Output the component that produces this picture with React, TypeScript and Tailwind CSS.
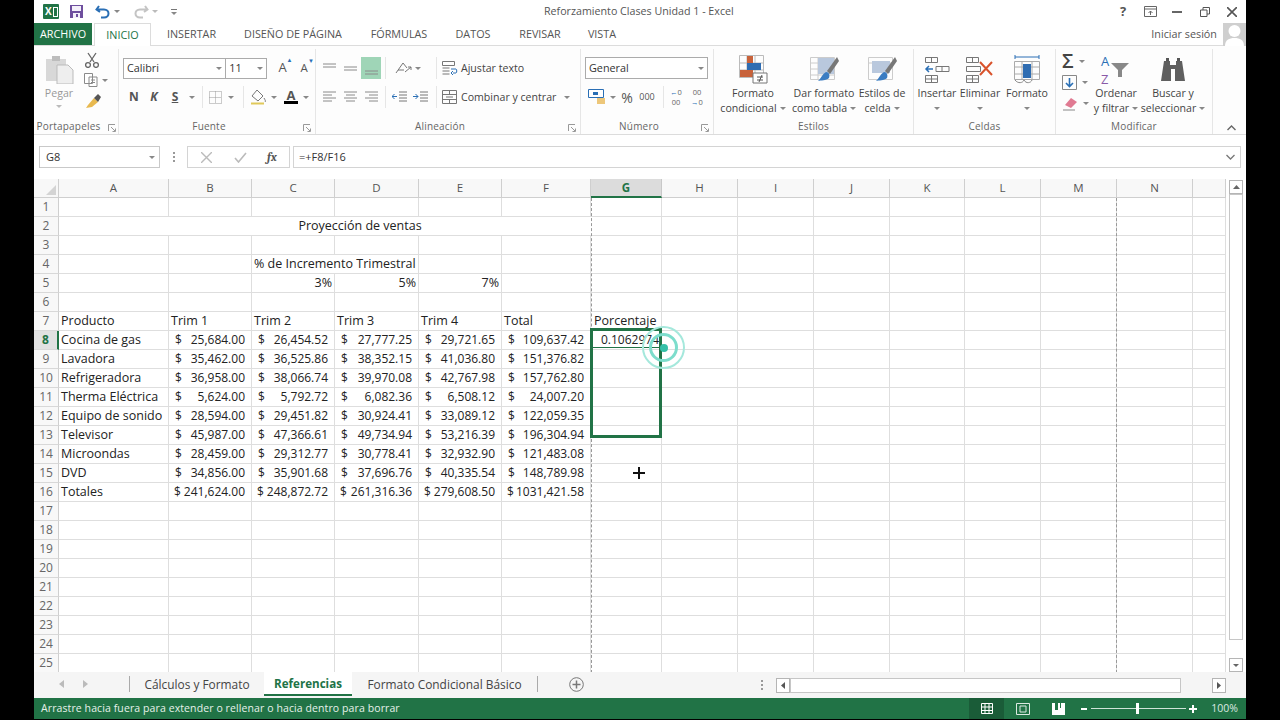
import React from "react";

const cols = [110, 83, 83, 84, 83, 89, 71, 76, 76, 76, 75, 76, 76, 76, 33];
const colNames = ["A","B","C","D","E","F","G","H","I","J","K","L","M","N",""];
type R = [string, string, string, string, string, string];
const data: Record<number, R> = {
  8: ["Cocina de gas","25,684.00","26,454.52","27,777.25","29,721.65","109,637.42"],
  9: ["Lavadora","35,462.00","36,525.86","38,352.15","41,036.80","151,376.82"],
  10: ["Refrigeradora","36,958.00","38,066.74","39,970.08","42,767.98","157,762.80"],
  11: ["Therma Eléctrica","5,624.00","5,792.72","6,082.36","6,508.12","24,007.20"],
  12: ["Equipo de sonido","28,594.00","29,451.82","30,924.41","33,089.12","122,059.35"],
  13: ["Televisor","45,987.00","47,366.61","49,734.94","53,216.39","196,304.94"],
  14: ["Microondas","28,459.00","29,312.77","30,778.41","32,932.90","121,483.08"],
  15: ["DVD","34,856.00","35,901.68","37,696.76","40,335.54","148,789.98"],
  16: ["Totales","241,624.00","248,872.72","261,316.36","279,608.50","1031,421.58"],
};
const header = ["Producto","Trim 1","Trim 2","Trim 3","Trim 4","Total","Porcentaje"];

const Caret = ({ c = "#888" }: { c?: string }) => (
  <svg width="6" height="3" viewBox="0 0 6 3"><path d="M0 0h6L3 3z" fill={c} /></svg>
);
const Launcher = () => (
  <svg width="8" height="8" viewBox="0 0 8 8" fill="none" stroke="#999"><path d="M.5 7V.5H7M3 3l4 4M4.5 7.5h3v-3" /></svg>
);
const Sep = ({ h = 22 }: { h?: number }) => <div className="w-px bg-[#e6e6e6] shrink-0" style={{ height: h }} />;
const Slot = ({ w, children }: { w: number; children?: React.ReactNode }) => (
  <div className="flex items-center justify-center shrink-0 h-full" style={{ width: w }}>{children}</div>
);
const Lines = ({ kind }: { kind: string }) => {
  const rows: Record<string, string> = {
    top: "M1 2h13M1 5h13",
    mid: "M1 5h13M1 8h13",
    bot: "M1 9h13M1 12h13",
    left: "M1 1h13M1 4h9M1 7h13M1 10h9",
    center: "M1 1h13M3 4h9M1 7h13M3 10h9",
    right: "M1 1h13M5 4h9M1 7h13M5 10h9",
  };
  return <svg width="15" height="13" viewBox="0 0 15 13" fill="none" stroke="#8a8a8a"><path d={rows[kind]} /></svg>;
};
const Big = ({ l1, l2, w, children }: { l1: string; l2: string; w: number; children: React.ReactNode }) => (
  <div className="flex flex-col items-center shrink-0 pt-[5px]" style={{ width: w }}>
    <div className="h-[30px] flex items-center justify-center">{children}</div>
    <div className="mt-[2px] leading-[15px] text-[10.6px] text-[#444] text-center whitespace-nowrap">{l1}</div>
    <div className="leading-[15px] text-[10.6px] text-[#444] text-center whitespace-nowrap flex items-center justify-center gap-[3px] h-[15px]">{l2}<Caret /></div>
  </div>
);
const Group = ({ w, label, launcher, labelPad = 16, launcherRight = 4, children }: { w: number; label: string; launcher?: boolean; labelPad?: number; launcherRight?: number; children: React.ReactNode }) => (
  <div className="flex flex-col shrink-0 border-r border-[#e6e6e6] h-[85px] mt-[3px]" style={{ width: w }}>
    <div className="h-[70px] flex flex-col">{children}</div>
    <div className="flex-1 flex items-center justify-center relative text-[10px] text-[#666] tracking-[0.2px]" style={{ paddingRight: labelPad }}>
      {label}
      {launcher && <span className="absolute top-[5px]" style={{ right: launcherRight }}><Launcher /></span>}
    </div>
  </div>
);

function TitleBar() {
  return (
    <div className="h-[23px] flex items-center relative text-[#555]">
      <div className="ml-[9px] w-[16px] h-[15px] bg-[#217346] text-white text-[10px] font-bold leading-[15px] pl-[2px] flex items-center gap-[1px] rounded-[1px]">
        X<span className="w-[5px] h-[10px] border border-white bg-[#217346]" />
      </div>
      <svg className="ml-[10px]" width="15" height="15" viewBox="0 0 15 15"><path d="M1 1h13v13H1z" fill="#6e4f9e" /><path d="M3 2h9v5H3z" fill="#f4f0fa" /><path d="M4 9h7v5H4z" fill="#f4f0fa" /><path d="M7 10h2v3H7z" fill="#6e4f9e" /></svg>
      <svg className="ml-[11px]" width="16" height="14" viewBox="0 0 16 14" fill="none" stroke="#2a6fb5" strokeWidth="2"><path d="M4 1 1.5 4.5 5 7M2 4.5h7c6 0 6 8 0 8H6" /></svg>
      <span className="ml-[3px]"><Caret /></span>
      <svg className="ml-[13px]" width="16" height="14" viewBox="0 0 16 14" fill="none" stroke="#c4c4c4" strokeWidth="2"><path d="M12 1l2.5 3.5L11 7M14 4.5H7c-6 0-6 8 0 8h3" /></svg>
      <span className="ml-[3px]"><Caret c="#bbb" /></span>
      <div className="ml-[13px] flex flex-col items-center gap-[2px]"><span className="w-[6px] h-px bg-[#777]" /><Caret /></div>
      <div className="flex-1 pl-[367px] text-[10.7px] text-[#555] whitespace-nowrap">Reforzamiento Clases Unidad 1 - Excel</div>
      <span className="text-[13px] font-bold w-[28px] text-center">?</span>
      <svg className="ml-[7px]" width="13" height="11" viewBox="0 0 13 11" fill="none" stroke="#666"><path d="M.5.5h12v10H.5zM.5 3h12M6.5 9V5M4.5 7l2-2 2 2" /></svg>
      <span className="ml-[15px] w-[10px] h-[2px] bg-[#666]" />
      <svg className="ml-[18px]" width="10" height="10" viewBox="0 0 10 10" fill="none" stroke="#555"><path d="M.5 3h6.5v6.5H.5zM3 3V.5h6.5V7H7" /></svg>
      <svg className="ml-[17px] mr-[9px]" width="10" height="10" viewBox="0 0 10 10" fill="none" stroke="#555" strokeWidth="1.6"><path d="M0 0l10 10M10 0L0 10" /></svg>
    </div>
  );
}

function Tabs() {
  const t: [string, number][] = [["INSERTAR", 81], ["DISEÑO DE PÁGINA", 122], ["FÓRMULAS", 90], ["DATOS", 58], ["REVISAR", 76], ["VISTA", 48]];
  return (
    <div className="h-[23px] flex items-stretch text-[10.8px] text-[#555] border-b border-[#dcdcdc]">
      <div className="w-[58px] bg-[#217346] text-white flex items-center justify-center">ARCHIVO</div>
      <div className="ml-[2px] w-[57px] h-[23px] bg-white border border-b-0 border-[#dcdcdc] text-[#217346] flex items-center justify-center">INICIO</div>
      {t.map(([n, w]) => <div key={n} className="flex items-center justify-center" style={{ width: w }}>{n}</div>)}
      <div className="flex-1" />
      <div className="flex items-center mr-[6px] text-[10.8px]">Iniciar sesión</div>
      <div className="w-[23px] h-[23px] bg-[#cfcfcf] overflow-hidden flex flex-col items-center">
        <svg width="23" height="23" viewBox="0 0 23 23"><circle cx="11.5" cy="8" r="6" fill="#fff" /><path d="M2 23c0-6 4-8 9.5-8S21 17 21 23z" fill="#fff" /></svg>
      </div>
    </div>
  );
}

function Ribbon() {
  return (
    <div className="h-[89px] flex border-b border-[#dcdcdc] bg-[#fdfdfd] relative">
      <Group w={85} label="Portapapeles" launcher labelPad={15} launcherRight={2}>
        <div className="flex h-full">
          <div className="w-[50px] flex flex-col items-center pt-[5px]">
            <svg width="30" height="30" viewBox="0 0 30 30"><path d="M2 5h20v22H2z" fill="#d8d8d8" /><path d="M8 2h8v5H8z" fill="#bdbdbd" /><path d="M13 11h11l5 5v14H13z" fill="#eee" stroke="#bbb" /></svg>
            <div className="text-[10.6px] text-[#999] leading-[15px] mt-[2px]">Pegar</div>
            <div className="mt-[4px]"><Caret c="#bbb" /></div>
          </div>
          <div className="flex flex-col items-start gap-[5px] pt-[3px]">
            <svg width="16" height="16" viewBox="0 0 16 16" fill="none" stroke="#666" strokeWidth="1.3"><path d="M4 1l6 9M12 1L6 10" /><circle cx="4" cy="13" r="2.4" /><circle cx="12" cy="13" r="2.4" /></svg>
            <div className="flex items-center gap-[4px]">
              <svg width="14" height="14" viewBox="0 0 14 14" fill="#fff" stroke="#8a8a8a"><path d="M.5.5h8v10h-8zM5 4h8v9.5H5z" /><path d="M7 7h4M7 9.5h4" /></svg><Caret />
            </div>
            <svg width="18" height="16" viewBox="0 0 18 16"><path d="M10 6l4 4-6 5-6 1 2-3z" fill="#e8b94f" /><path d="M10 6l4-4 3 3-3 5z" fill="#555" /></svg>
          </div>
        </div>
      </Group>
      <Group w={197} label="Fuente" launcher>
        <div className="flex items-center h-[22px] mt-[8px] ml-[4px]">
          <div className="w-[105px] h-[21px] border border-[#ababab] bg-white flex items-center justify-between px-[3px] text-[10.8px] text-[#333]">Calibri<Caret /></div>
          <div className="w-[41px] h-[21px] border border-l-0 border-[#ababab] bg-white flex items-center justify-between px-[3px] text-[10.8px] text-[#333]">11<Caret /></div>
          <div className="ml-[5px] w-[22px] text-center text-[13px] text-[#555] relative">A<span className="absolute right-[1px] -top-[2px] text-[6px] text-[#2a6fb5]">▲</span></div>
          <div className="w-[22px] text-center text-[11.5px] text-[#555] relative">A<span className="absolute right-[1px] -top-[2px] text-[6px] text-[#2a6fb5]">▼</span></div>
        </div>
        <div className="flex items-center h-[24px] mt-[6px] text-[#555] text-[12px] pl-[5px]">
          <Slot w={20}><b>N</b></Slot>
          <Slot w={20}><b><i>K</i></b></Slot>
          <Slot w={22}><b className="underline">S</b></Slot>
          <Slot w={11}><Caret /></Slot>
          <Slot w={10}><Sep /></Slot>
          <Slot w={16}><svg width="13" height="13" viewBox="0 0 13 13" fill="none" stroke="#999" strokeDasharray="1 1"><path d="M.5.5h12v12H.5zM6.5.5v12M.5 6.5h12" /></svg></Slot>
          <Slot w={15}><Caret /></Slot>
          <Slot w={10}><Sep /></Slot>
          <Slot w={20}><svg width="17" height="16" viewBox="0 0 17 16" fill="none" stroke="#777"><path d="M7 1l6 6-5 5-6-5zM14 9c1 2 2 3 1 4" /><path d="M1 14.5h13" stroke="#e0c95a" strokeWidth="2" /></svg></Slot>
          <Slot w={11}><Caret /></Slot>
          <Slot w={24}><div className="flex flex-col items-center leading-[11px]"><span className="text-[13px] font-bold text-[#555]">A</span><span className="w-[14px] h-[3px] bg-black" /></div></Slot>
          <Slot w={6}><Caret /></Slot>
        </div>
      </Group>
      <Group w={265} label="Alineación" launcher>
        <div className="flex items-center h-[22px] mt-[8px] pl-[3px]">
          <Slot w={21}><Lines kind="top" /></Slot>
          <Slot w={21}><Lines kind="mid" /></Slot>
          <div className="w-[20px] h-[22px] bg-[#9fd5b7] flex items-center justify-center"><Lines kind="bot" /></div>
          <Slot w={4} />
          <Sep />
          <Slot w={8} />
          <svg width="18" height="16" viewBox="0 0 18 16" fill="none" stroke="#777"><path d="M2 13L9 3l4 5M4 10h6M11 12l6-5M17 7h-3M17 7v3" /></svg>
          <span className="ml-[3px]"><Caret /></span>
          <Slot w={15} />
          <Sep />
          <Slot w={5} />
          <svg width="16" height="15" viewBox="0 0 16 15" fill="none" stroke="#777"><path d="M.5.5h12v4H.5zM.5 7h7M.5 10h7M.5 13h7" /><path d="M9 8h5c1 0 1 4 0 4h-3M11 10l-2 2 2 2" stroke="#2a6fb5" /></svg>
          <span className="ml-[3px] pt-[2px] text-[10.6px] text-[#444] whitespace-nowrap">Ajustar texto</span>
        </div>
        <div className="flex items-center h-[24px] mt-[6px] pl-[3px]">
          <Slot w={21}><Lines kind="left" /></Slot>
          <Slot w={21}><Lines kind="center" /></Slot>
          <Slot w={20}><Lines kind="right" /></Slot>
          <Slot w={4} />
          <Sep />
          <Slot w={3} />
          <Slot w={21}><svg width="15" height="12" viewBox="0 0 15 12" fill="none" stroke="#777"><path d="M7 1h8M7 4h8M7 7h8M7 10h8" /><path d="M5 5.5H0M2.5 3 0 5.5 2.5 8" stroke="#2a6fb5" /></svg></Slot>
          <Slot w={21}><svg width="15" height="12" viewBox="0 0 15 12" fill="none" stroke="#777"><path d="M7 1h8M7 4h8M7 7h8M7 10h8" /><path d="M0 5.5h5M2.5 3 5 5.5 2.5 8" stroke="#2a6fb5" /></svg></Slot>
          <Slot w={5} />
          <Sep />
          <Slot w={5} />
          <svg width="15" height="14" viewBox="0 0 15 14" fill="none" stroke="#777"><path d="M.5.5h14v13H.5zM.5 4.5h14M.5 9.5h14M7.5.5v4M7.5 9.5v4M4 7h7" /></svg>
          <span className="ml-[4px] pt-[2px] text-[10.6px] text-[#444] whitespace-nowrap">Combinar y centrar</span>
          <span className="ml-[8px]"><Caret /></span>
        </div>
      </Group>
      <Group w={133} label="Número" launcher>
        <div className="h-[22px] mt-[8px] ml-[4px] w-[123px] border border-[#ababab] bg-white flex items-center justify-between px-[3px] text-[10.8px] text-[#333]">General<Caret /></div>
        <div className="flex items-center h-[24px] mt-[6px] pl-[7px] text-[#555]">
          <svg width="18" height="16" viewBox="0 0 18 16"><path d="M.5.5h15v8H.5z" fill="#fff" stroke="#2a6fb5" /><path d="M5 3h5v3H5z" fill="#2a6fb5" /><path d="M9 9h8v6H9z" fill="#edc77a" /></svg>
          <span className="ml-[4px]"><Caret /></span>
          <span className="ml-[3px] text-[14px] w-[16px] text-center">%</span>
          <span className="text-[9px] w-[24px] text-center">000</span>
          <Slot w={4} />
          <Sep />
          <span className="ml-[4px] text-[7.5px] leading-[10.5px] w-[16px] text-center text-[#666]"><span className="text-[#2a6fb5]">←</span>0<br />00</span>
          <span className="ml-[5px] text-[7.5px] leading-[10.5px] w-[16px] text-center text-[#666]">00<br /><span className="text-[#2a6fb5]">→</span>0</span>
        </div>
      </Group>
      <Group w={200} label="Estilos" labelPad={0}>
        <div className="flex">
          <Slot w={3} />
          <Big l1="Formato" l2="condicional" w={72}>
            <svg width="30" height="30" viewBox="0 0 30 30" fill="none" stroke="#bbb"><path d="M1.5 1.5h24v22h-24zM1.5 9h24M1.5 16h24M9 1.5v22M17 1.5v22" /><path d="M9 2h6v7H9z" fill="#c8623a" stroke="none" /><path d="M9 9h14v7H9z" fill="#2f6db2" stroke="none" /><path d="M2 16h13v7H2z" fill="#c8623a" stroke="none" /><path d="M15 19h14v10H15z" fill="#fff" stroke="#777" /><path d="M19 23h6M19 26h6M24 21l-3 7" stroke="#555" /></svg>
          </Big>
          <Big l1="Dar formato" l2="como tabla" w={70}>
            <svg width="30" height="30" viewBox="0 0 30 30" fill="none" stroke="#ccc"><path d="M1.5 3.5h24v22h-24zM1.5 9h24M1.5 15h24M1.5 21h24M9 3.5v22M17 3.5v22" /><path d="M9 4h16v16H9z" fill="#b9c8dd" stroke="none" /><path d="M28 3L18 17l3 3 9-13z" fill="#777" stroke="none" /><path d="M17 18c3 0 4 3 3 6-3 3-8 2-11 3 3-2 4-7 8-9z" fill="#3a7cc2" stroke="none" /></svg>
          </Big>
          <Big l1="Estilos de" l2="celda" w={46}>
            <svg width="30" height="30" viewBox="0 0 30 30" fill="none" stroke="#ccc"><path d="M1.5 3.5h24v22h-24zM1.5 9h24" /><path d="M5 7h18v12H5z" fill="#b9c8dd" stroke="none" /><path d="M28 3L18 17l3 3 9-13z" fill="#777" stroke="none" /><path d="M17 18c3 0 4 3 3 6-3 3-8 2-11 3 3-2 4-7 8-9z" fill="#3a7cc2" stroke="none" /></svg>
          </Big>
        </div>
      </Group>
      <Group w={142} label="Celdas" labelPad={0}>
        <div className="flex">
          {([
            ["Insertar", 46, <svg key="i" width="26" height="30" viewBox="0 0 26 30" fill="none" stroke="#777"><path d="M1.5 3.5h12v5h-12zM7.5 3.5v5M1.5 21.5h12v7h-12zM1.5 25h12M7.5 21.5v7M12 12.5h13v5H12zM18 12.5v5" /><path d="M9 15H2M5 12l-3 3 3 3" stroke="#2a6fb5" strokeWidth="1.5" /></svg>],
            ["Eliminar", 40, <svg key="e" width="30" height="30" viewBox="0 0 30 30" fill="none" stroke="#777"><path d="M1.5 3.5h12v5h-12zM7.5 3.5v5M1.5 21.5h12v7h-12zM1.5 25h12M7.5 21.5v7M1.5 12.5h14v5h-14z" /><path d="M15 8l12 13M27 8L15 21" stroke="#d9532c" strokeWidth="2" /></svg>],
            ["Formato", 54, <svg key="f" width="28" height="30" viewBox="0 0 28 30" fill="none" stroke="#aaa"><path d="M1.5 7.5h25v18h-25zM1.5 13h25M1.5 20h25M9 7.5v18M19 7.5v18" /><path d="M10 10h8v14h-8z" fill="#2f6db2" stroke="none" /><path d="M2 3h24M2 1v4M26 1v4" stroke="#2a6fb5" /><path d="M2 26c3 4 8 3 9 0 2 4 7 3 8 0" stroke="#888" /></svg>],
          ] as [string, number, React.ReactNode][]).map(([n, w, ic], i) => (
            <div key={i} className="flex flex-col items-center pt-[5px] shrink-0" style={{ width: w }}>
              <div className="h-[30px] flex items-center">{ic}</div>
              <div className="mt-[2px] leading-[15px] text-[10.6px] text-[#444] whitespace-nowrap">{n}</div>
              <div className="h-[15px] flex items-center"><Caret /></div>
            </div>
          ))}
        </div>
      </Group>
      <div className="flex flex-col shrink-0 h-[85px] mt-[3px] w-[157px] border-r border-[#e6e6e6]">
        <div className="h-[70px] flex">
          <div className="w-[38px] flex flex-col gap-[2px] pl-[6px] pt-[2px]">
            <div className="flex items-center gap-[5px] h-[20px]"><span className="text-[20px] leading-[20px] text-[#444] font-semibold">Σ</span><Caret /></div>
            <div className="flex items-center gap-[5px] h-[19px]"><svg width="15" height="15" viewBox="0 0 15 15" fill="none" stroke="#888"><path d="M.5.5h14v14H.5z" /><path d="M7.5 3v8M4 8l3.5 3.5L11 8" stroke="#2a6fb5" strokeWidth="1.6" /></svg><Caret /></div>
            <div className="flex items-center gap-[5px] h-[19px]"><svg width="16" height="14" viewBox="0 0 16 14"><path d="M9 1l6 4-6 6-6-3z" fill="#e07a92" /><path d="M1 13h12" stroke="#888" /></svg><Caret /></div>
          </div>
          <Big l1="Ordenar" l2="y filtrar" w={44}>
            <div className="relative w-[30px] h-[30px] text-[13px] leading-[18px] -mt-[5px] text-[#2a6fb5]">A<br /><span className="text-[#8a5aa8]">Z</span>
              <svg className="absolute left-[10px] top-[11px]" width="18" height="14" viewBox="0 0 18 14"><path d="M0 0h18l-7 7v7H7V7z" fill="#888" /></svg>
            </div>
          </Big>
          <Big l1="Buscar y" l2="seleccionar" w={70}>
            <svg width="26" height="24" viewBox="0 0 26 24"><path d="M4 4h6v4h6V4h6l3 20H15V12h-4v12H1z" fill="#5f5f5f" /><path d="M6 1h3v3H6zM17 1h3v3h-3z" fill="#555" /></svg>
          </Big>
        </div>
        <div className="flex-1 flex items-center justify-center text-[10px] text-[#666] tracking-[0.2px]">Modificar</div>
      </div>
      <div className="flex-1 flex items-end justify-center pb-[3px] pl-[3px]"><svg width="9" height="6" viewBox="0 0 9 6" fill="none" stroke="#666" strokeWidth="1.4"><path d="M.5 5l4-4 4 4" /></svg></div>
    </div>
  );
}

function FormulaBar() {
  return (
    <div className="h-[44px] pt-[11px] flex items-start pl-[5px] pr-[5px] bg-white text-[11px] text-[#333]">
      <div className="w-[121px] h-[22px] border border-[#c9c9c9] flex items-center justify-between pl-[6px] pr-[4px]">G8<Caret /></div>
      <div className="w-[27px] h-[22px] flex flex-col items-center justify-center gap-[2px]">
        <span className="w-[2px] h-[2px] bg-[#999]" /><span className="w-[2px] h-[2px] bg-[#999]" /><span className="w-[2px] h-[2px] bg-[#999]" />
      </div>
      <div className="w-[103px] h-[22px] border border-[#d4d4d4] flex items-center text-[#bbb]">
        <Slot w={36}><svg width="11" height="11" viewBox="0 0 11 11" stroke="#bbb" strokeWidth="1.4"><path d="M0 0l11 11M11 0L0 11" /></svg></Slot>
        <Slot w={32}><svg width="13" height="11" viewBox="0 0 13 11" fill="none" stroke="#bbb" strokeWidth="1.6"><path d="M1 6l3.5 4L12 1" /></svg></Slot>
        <Slot w={32}><i className="text-[#555] text-[12px] font-serif font-bold">fx</i></Slot>
      </div>
      <div className="ml-[3px] flex-1 h-[22px] border border-[#d4d4d4] flex items-center justify-between pl-[5px] pr-[5px]">
        =+F8/F16
        <svg width="9" height="6" viewBox="0 0 9 6" fill="none" stroke="#777" strokeWidth="1.3"><path d="M.5 1l4 4 4-4" /></svg>
      </div>
    </div>
  );
}

const cellBase = "h-[19px] border-r border-b border-[#dedede] shrink-0 flex items-center whitespace-nowrap text-[#222] overflow-hidden";
const txt = "text-[12.5px] pt-[1px]";

function Row({ n }: { n: number }) {
  const rowhead = (
    <div className={`w-[25px] h-[19px] shrink-0 border-b border-[#d8d8d8] flex items-center justify-center text-[12px] ${n === 8 ? "bg-[#e1e1e1] text-[#217346] font-bold border-r-2 border-r-[#217346]" : "bg-[#f8f8f8] text-[#666] border-r border-r-[#cfcfcf]"}`}>{n}</div>
  );
  let cells: React.ReactNode;
  if (n === 2) {
    cells = (<>
      <div className={`${cellBase} ${txt} justify-center`} style={{ width: 603 }}>Proyección de ventas</div>
      {cols.slice(7).map((w, i) => <div key={i} className={cellBase} style={{ width: w }} />)}
    </>);
  } else if (n === 4) {
    cells = (<>
      <div className={cellBase} style={{ width: cols[0] }} />
      <div className={cellBase} style={{ width: cols[1] }} />
      <div className={`${cellBase} ${txt} pl-[2px]`} style={{ width: cols[2] + cols[3] }}>% de Incremento Trimestral</div>
      {cols.slice(4).map((w, i) => <div key={i} className={cellBase} style={{ width: w }} />)}
    </>);
  } else {
    cells = cols.map((w, i) => {
      let content: React.ReactNode = null;
      let cls = "";
      if (n === 5 && i >= 2 && i <= 4) { content = ["3%", "5%", "7%"][i - 2]; cls = `justify-end pr-[2px] ${txt}`; }
      if (n === 7 && i < 7) { content = header[i]; cls = i === 6 ? `pl-[3px] ${txt}` : `pl-[2px] ${txt}`; }
      if (data[n] && i < 6) {
        if (i === 0) { content = data[n][0]; cls = `pl-[2px] ${txt}`; }
        else {
          cls = n === 16 ? "justify-between pl-[5px] pr-[6px] text-[12px]" : "justify-between pl-[6px] pr-[6px] text-[12px]";
          content = <><span>$</span><span>{data[n][i]}</span></>;
        }
      }
      if (n === 8 && i === 6) { content = "0.1062974"; cls = "justify-end pr-[2px] text-[12px]"; }
      return <div key={i} className={`${cellBase} ${cls}`} style={{ width: w }}>{content}</div>;
    });
  }
  return <div className="flex">{rowhead}{cells}</div>;
}

function Sheet() {
  return (
    <div className="flex h-[493px] relative shrink-0">
      <div className="w-[1192px] shrink-0 relative overflow-hidden">
        <div className="flex h-[19px]">
          <div className="w-[25px] h-[19px] bg-[#f8f8f8] border-r border-b border-[#cfcfcf] flex items-end justify-end p-[2px]">
            <svg width="10" height="10" viewBox="0 0 10 10"><path d="M10 0v10H0z" fill="#d4d4d4" /></svg>
          </div>
          {cols.map((w, i) => (
            <div key={i} className={`h-[19px] shrink-0 border-r flex items-center justify-center text-[11.5px] ${i === 6 ? "bg-[#dcdcdc] text-[#217346] font-bold border-b-2 border-b-[#217346] border-[#c8c8c8]" : "bg-[#f8f8f8] text-[#555] border-b border-[#cfcfcf]"}`} style={{ width: w }}>{colNames[i]}</div>
          ))}
        </div>
        {Array.from({ length: 25 }, (_, i) => <Row key={i} n={i + 1} />)}
        <div className="absolute left-[557px] top-[19px] h-[475px] w-0 border-l border-dashed border-[#999]" />
        <div className="absolute left-[1082px] top-[19px] h-[475px] w-0 border-l border-dashed border-[#999]" />
        <div className="absolute left-[556px] top-[149px] w-[72px] h-[110px] border-[3px] border-[#217346]">
          <div className="h-[17px] border-b-[1px] border-[#217346]" />
        </div>
        <div className="absolute left-[608px] top-[147px] w-[43px] h-[43px] rounded-full border-[2px] border-[#a5e8dc] flex items-center justify-center">
          <div className="w-[29px] h-[29px] rounded-full border-[3px] border-[#7dddcc] flex items-center justify-center">
            <div className="w-[8px] h-[8px] rounded-full bg-[#35c0a8]" />
          </div>
        </div>
        <svg className="absolute left-[599px] top-[288px]" width="12" height="12" viewBox="0 0 12 12"><path d="M6 0v12M0 6h12" stroke="#111" strokeWidth="2" /></svg>
      </div>
      <div className="flex-1 flex flex-col items-start pl-[3px] pt-[1px]">
        <div className="w-[14px] h-[14px] border border-[#b5b5b5] flex items-center justify-center"><svg width="7" height="4" viewBox="0 0 7 4"><path d="M0 4h7L3.5 0z" fill="#666" /></svg></div>
        <div className="w-[14px] h-[446px] border border-[#c6c6c6] bg-white" />
        <div className="w-[14px] flex-1" />
        <div className="w-[14px] h-[14px] border border-[#b5b5b5] flex items-center justify-center"><Caret c="#666" /></div>
      </div>
    </div>
  );
}

function SheetTabs() {
  return (
    <div className="h-[26px] flex items-start bg-[#f5f5f5] text-[11.9px] text-[#444] shrink-0">
      <div className="flex items-center h-[24px] w-[95px] pl-[25px] gap-[19px]">
        <svg width="5" height="8" viewBox="0 0 5 8"><path d="M5 0v8L0 4z" fill="#bbb" /></svg>
        <svg width="5" height="8" viewBox="0 0 5 8"><path d="M0 0v8l5-4z" fill="#bbb" /></svg>
      </div>
      <div className="h-[16px] mt-[4px] w-px bg-[#aaa]" />
      <div className="w-[134px] h-[25px] pt-px flex items-center justify-center">Cálculos y Formato</div>
      <div className="w-[88px] h-[25px] -mt-px pt-[3px] bg-white border-b-2 border-[#217346] text-[#217346] text-[11.6px] font-bold flex items-center justify-center">Referencias</div>
      <div className="w-[185px] h-[25px] pt-px flex items-center justify-center">Formato Condicional Básico</div>
      <div className="h-[16px] mt-[4px] w-px bg-[#aaa]" />
      <div className="ml-[31px] h-[25px] flex items-center">
        <svg width="15" height="15" viewBox="0 0 15 15" fill="none" stroke="#777"><circle cx="7.5" cy="7.5" r="6.8" /><path d="M7.5 3.5v8M3.5 7.5h8" strokeWidth="1.5" /></svg>
      </div>
      <div className="ml-[177px] h-[25px] flex flex-col items-center justify-center gap-[2px]">
        <span className="w-[2px] h-[2px] bg-[#999]" /><span className="w-[2px] h-[2px] bg-[#999]" /><span className="w-[2px] h-[2px] bg-[#999]" />
      </div>
      <div className="ml-[13px] mt-[6px] w-[14px] h-[15px] border border-[#b5b5b5] bg-white flex items-center justify-center"><svg width="4" height="7" viewBox="0 0 4 7"><path d="M4 0v7L0 3.5z" fill="#555" /></svg></div>
      <div className="mt-[6px] w-[391px] h-[15px] border border-[#c6c6c6] bg-white" />
      <div className="mt-[6px] ml-[31px] w-[14px] h-[15px] border border-[#b5b5b5] bg-white flex items-center justify-center"><svg width="4" height="7" viewBox="0 0 4 7"><path d="M0 0v7l4-3.5z" fill="#555" /></svg></div>
    </div>
  );
}

function StatusBar() {
  return (
    <div className="h-[21px] bg-[#217346] flex items-center text-white text-[10.5px] shrink-0">
      <div className="pl-[7px] whitespace-nowrap text-[#e6f1ea] tracking-[0.1px]">Arrastre hacia fuera para extender o rellenar o hacia dentro para borrar</div>
      <div className="flex-1" />
      <div className="w-[35px] h-[21px] bg-[#1a5c38] flex items-center justify-center">
        <svg width="12" height="11" viewBox="0 0 12 11" fill="none" stroke="#fff"><path d="M.5.5h11v10H.5zM4 .5v10M8 .5v10M.5 4h11M.5 7.5h11" /></svg>
      </div>
      <svg className="ml-[12px]" width="14" height="12" viewBox="0 0 14 12" fill="none" stroke="#dbe9e1"><path d="M.5.5h13v11H.5zM4 3h6v6H4z" /></svg>
      <svg className="ml-[22px]" width="13" height="12" viewBox="0 0 13 12"><path d="M0 0h13v12H0z" fill="#fff" /><path d="M3 0h3v7H3zM8 0h1v5H8z" fill="#217346" /></svg>
      <span className="ml-[16px] w-[6px] h-[2px] bg-white" />
      <div className="ml-[4px] w-[95px] h-px bg-[#cfe3d7] relative">
        <span className="absolute left-[45px] -top-[5px] w-[3px] h-[11px] bg-white" />
      </div>
      <svg className="ml-[3px]" width="8" height="8" viewBox="0 0 8 8"><path d="M4 0v8M0 4h8" stroke="#fff" strokeWidth="2" /></svg>
      <span className="ml-[14px] mr-[8px] text-[10.5px] text-[#dbe9e1]">100%</span>
    </div>
  );
}

export default function App() {
  return (
    <div className="w-[1280px] h-[720px] bg-black overflow-hidden pl-[34px] pr-[34px]" style={{ fontFamily: '"Open Sans","Noto Sans",sans-serif' }}>
      <div className="w-[1212px] h-[719px] bg-white flex flex-col">
        <TitleBar />
        <Tabs />
        <Ribbon />
        <FormulaBar />
        <Sheet />
        <SheetTabs />
        <StatusBar />
      </div>
    </div>
  );
}
